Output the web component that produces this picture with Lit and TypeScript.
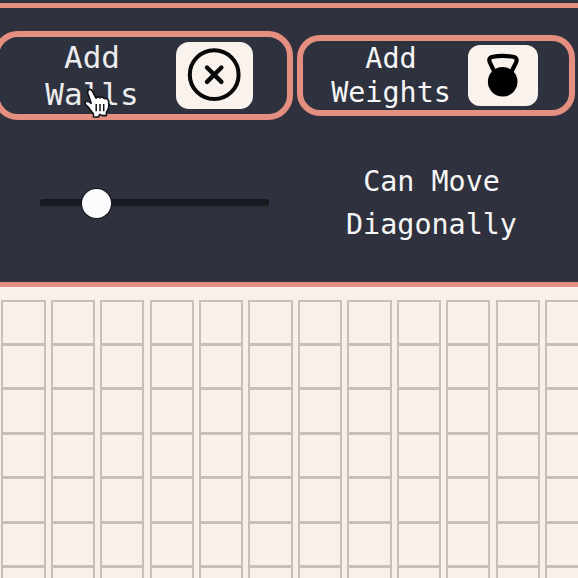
import { LitElement, html, css } from "lit";
import { customElement } from "lit/decorators.js";

const COLUMNS = Array.from({ length: 12 });
const ROWS = Array.from({ length: 7 });

@customElement("maze-grid")
class MazeGrid extends LitElement {
  static styles = css`
    :host { display: block; overflow: hidden; }
    .columns { display: flex; gap: 5.1px; padding: 12.6px 0 0 1.2px; width: max-content; }
    .column { display: flex; flex-direction: column; }
    .cell {
      box-sizing: border-box;
      width: 44.35px;
      height: 45.4px;
      margin-bottom: -1px;
      border: 2px solid #c6c0b9;
      background: #f8f0ea;
    }
  `;
  render() {
    return html`<div class="columns">
      ${COLUMNS.map(() => html`<div class="column">${ROWS.map(() => html`<div class="cell"></div>`)}</div>`)}
    </div>`;
  }
}

@customElement("app-root")
class AppRoot extends LitElement {
  static styles = css`
    :host {
      display: flex;
      flex-direction: column;
      box-sizing: border-box;
      width: 578px;
      height: 578px;
      overflow: hidden;
      position: relative;
      background: #f8f1eb;
      color: #f6f6f6;
      font-family: "DejaVu Sans Mono", monospace;
      font-size: 28.4px;
      text-align: center;
    }
    .top { flex: none; height: 3px; background: #30333f; }
    header {
      flex: none;
      box-sizing: border-box;
      height: 284px;
      overflow: hidden;
      background: #2f323e;
      border-top: 5px solid #e58f80;
      border-bottom: 5px solid #e58f80;
    }
    .buttons { display: flex; align-items: center; gap: 4px; height: 135px; margin-left: -7px; }
    .button {
      box-sizing: border-box;
      display: flex;
      align-items: center;
      flex: none;
      border: 6px solid #e58f80;
      background: #2e323e;
      box-shadow: 0 0 1px #6d3c3c;
    }
    .walls { width: 300px; height: 89px; border-radius: 25px; font-size: 31px; line-height: 36.5px; color: #ececee; }
    .weights { width: 278px; height: 81px; border-radius: 23px; line-height: 33.5px; }
    .walls .label { width: 94px; margin: 0 37px 0 46px; }
    .weights .label { width: 120px; margin: 0 17px 0 28px; }
    .tile { display: flex; flex: none; background: #faf3ed; }
    .walls .tile { width: 77px; height: 67px; border-radius: 13px; }
    .weights .tile { width: 70px; height: 61px; border-radius: 12px; }
    .options { display: flex; align-items: center; height: 120px; }
    .track {
      flex: none;
      position: relative;
      width: 229px;
      height: 8px;
      margin-left: 40px;
      border-radius: 3px;
      background: linear-gradient(#14191e, #171c20 60%, #24282f);
    }
    .thumb {
      position: absolute;
      left: 42.4px;
      top: -10.2px;
      width: 29px;
      height: 29px;
      border-radius: 50%;
      background: #fcfcfe;
      box-shadow: 0 0 0 1px #15191e;
    }
    .diagonal { width: 180px; margin-left: 72.5px; line-height: 43px; }
    maze-grid { flex: 1; min-height: 0; }
    .cursor { position: absolute; left: 83px; top: 87px; }
    svg { display: block; }
  `;
  render() {
    return html`
      <div class="top"></div>
      <header>
        <div class="buttons">
          <div class="button walls">
            <div class="label">Add<br />Walls</div>
            <div class="tile">
              <svg width="77" height="67" viewBox="0 0 77 67" fill="none" stroke="#090909">
                <circle cx="38.2" cy="32.7" r="24.4" stroke-width="4" />
                <path d="M31 25.5 45.4 39.9M45.4 25.5 31 39.9" stroke-width="4.4" stroke-linecap="round" />
              </svg>
            </div>
          </div>
          <div class="button weights">
            <div class="label">Add<br />Weights</div>
            <div class="tile">
              <svg width="70" height="61" viewBox="0 0 70 61">
                <circle cx="34.7" cy="36.8" r="14.8" fill="#000" />
                <path d="M26 26 21.7 17.2Q20.4 13 23.7 12Q35 9.6 46.2 12Q49.5 13 48.2 17.2L43.8 26"
                  fill="none" stroke="#000" stroke-width="4.2" stroke-linejoin="round" />
              </svg>
            </div>
          </div>
        </div>
        <div class="options">
          <div class="track"><div class="thumb"></div></div>
          <div class="diagonal">Can Move<br />Diagonally</div>
        </div>
      </header>
      <maze-grid></maze-grid>
      <svg class="cursor" width="28" height="32" viewBox="0 0 28 32">
        <path d="M8 15.5 4.8 6.2Q4.2 2.8 6.4 2.4Q8.6 2.1 9.8 5.1L13 11.2Q15 8.8 17.2 10.8Q19.5 9.4 21.2 11.6Q24.5 10.6 25.6 13.6L25.8 19.4Q25.4 23 23.4 25.2V28.6H19L16.8 27.4L15.4 30H10.4V26.8Q7.2 23 5.4 20.2L2.3 17.2Q1.4 14.3 4.3 14.2Q6.1 14.2 8 16.5Z"
          fill="#fff" stroke="#101318" stroke-width="1.6" stroke-linejoin="round" />
        <path d="M13.2 17V24.2M17 17V24.2M20.7 17V24.2" fill="none" stroke="#111" stroke-width="1.5" />
      </svg>
    `;
  }
}
